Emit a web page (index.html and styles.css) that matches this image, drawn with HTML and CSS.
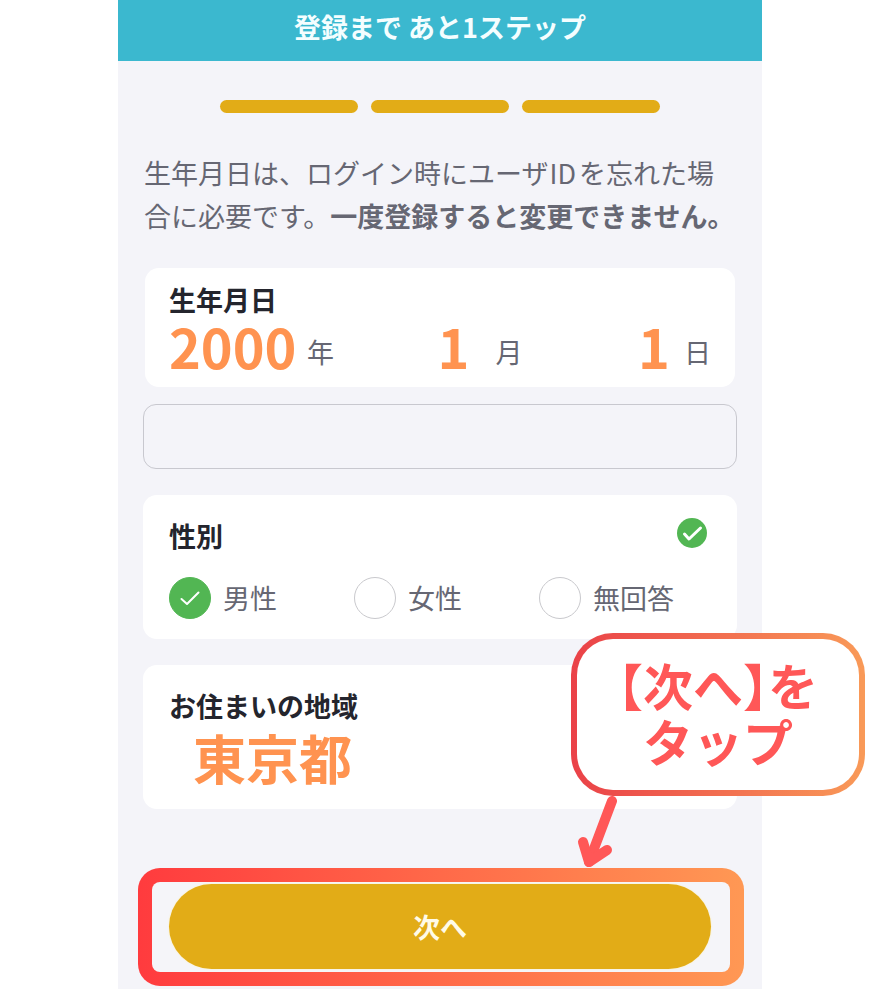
FILE: index.html
```html
<!DOCTYPE html>
<html lang="ja">
<head>
<meta charset="utf-8">
<meta name="viewport" content="width=device-width, initial-scale=1">
<title>登録まで あと1ステップ</title>
<link rel="stylesheet" href="styles.css">
</head>
<body>
<main class="screen">
  <header class="header"><h1 class="title">登録まで あと1ステップ</h1></header>
  <div class="progress">
    <span class="step"></span><span class="step"></span><span class="step"></span>
  </div>
  <p class="lead">生年月日は、ログイン時にユーザ<span class="latin">ID</span>を忘れた場<br>合に必要です。<strong>一度登録すると変更できません。</strong></p>

  <form class="form">
    <fieldset class="card card-birth">
      <legend class="label">生年月日</legend>
      <div class="birth">
        <label class="part part-year"><input class="value" type="text" inputmode="numeric" value="2000"><span class="unit">年</span></label>
        <label class="part part-month"><input class="value" type="text" inputmode="numeric" value="1"><span class="unit">月</span></label>
        <label class="part part-day"><input class="value" type="text" inputmode="numeric" value="1"><span class="unit">日</span></label>
      </div>
    </fieldset>

    <input class="blank" type="text" aria-label="入力欄">

    <fieldset class="card card-gender">
      <legend class="label">性別</legend>
      <svg class="done" viewBox="0 0 30 30" aria-hidden="true">
        <circle cx="15" cy="15" r="15"/>
        <path d="M7.500 16 L12 21 L23.500 10"/>
      </svg>
      <div class="options">
        <label class="option"><input class="radio" type="radio" name="gender" checked><svg class="tick" viewBox="0 0 42 42" aria-hidden="true"><path d="M12.500 22 L18 27 L29.500 15.500"/></svg><span>男性</span></label>
        <label class="option"><input class="radio" type="radio" name="gender"><span>女性</span></label>
        <label class="option"><input class="radio" type="radio" name="gender"><span>無回答</span></label>
      </div>
    </fieldset>

    <div class="card card-region">
      <label class="label" for="region">お住まいの地域</label>
      <select class="region" id="region"><option>東京都</option></select>
    </div>

    <div class="highlight">
      <button class="next" type="button">次へ</button>
    </div>
  </form>

  <aside class="callout">【次へ】を<br>タップ</aside>
  <svg class="arrow" viewBox="0 0 50 76" aria-hidden="true">
    <path d="M39 5 L16 66"/>
    <path d="M10 46 L16 66 L34 54"/>
  </svg>
</main>
</body>
</html>
```
FILE: styles.css
```css
* { box-sizing: border-box; }

body {
  margin: 0;
  background: #fff;
  color: #666773;
  font-family: "Noto Sans CJK JP", sans-serif;
  font-size: 27px;
}

input, select, button { font-family: inherit; color: inherit; }

.screen {
  position: relative;
  max-width: 644px;
  margin: 0 auto;
  padding-bottom: 3px;
  background: #f4f4f9;
}

.header {
  display: flex;
  justify-content: center;
  padding: 7px 0 14px;
  background: #3bb8cf;
}

.title {
  margin: 0;
  color: #f4feff;
  font-size: 27px;
  font-weight: 700;
  line-height: 40px;
}

.progress {
  display: flex;
  justify-content: center;
  gap: 13px;
  padding: 39px 0 38px;
}

.step {
  width: 138px;
  height: 13px;
  border-radius: 7px;
  background: #e2ac17;
}

.lead {
  margin: 0;
  padding: 0 20px 0 26px;
  line-height: 43px;
}

.latin { margin: 0 3px 0 1px; }

.form {
  display: flex;
  flex-direction: column;
  padding: 31px 25px 0;
}

.card {
  min-width: 0;
  margin: 0;
  border: 0;
  border-radius: 14px;
  background: #fff;
}

.label {
  display: block;
  float: left;
  width: 100%;
  padding: 0;
  color: #24252d;
  font-size: 27px;
  font-weight: 700;
  line-height: 40px;
}

.card-birth {
  margin: 0 2px;
  padding: 12px 24px 17px;
}

.birth {
  display: grid;
  grid-template-columns: 269fr 201fr 73fr;
  clear: both;
}

.part {
  display: flex;
  align-items: flex-end;
}

.unit { line-height: 36px; }

.part-year { gap: 10px; }
.part-month { gap: 26px; }
.part-day { gap: 14px; }

.value {
  width: 32px;
  height: 50px;
  padding: 0;
  border: 0;
  outline: 0;
  background: none;
  color: #ff9350;
  font-size: 54px;
  font-weight: 700;
  line-height: 50px;
}

.part-year .value { width: 128px; }

.blank {
  height: 65px;
  margin: 17px 0 26px;
  padding: 0 24px;
  border: 1px solid #c8c8cf;
  border-radius: 13px;
  background: #f4f4f9;
  font-size: 27px;
}

.card-gender {
  position: relative;
  padding: 21px 26px 20px;
}

.done {
  position: absolute;
  top: 23px;
  right: 30px;
  width: 30px;
  height: 30px;
  fill: #52b653;
}

.done path, .tick path {
  fill: none;
  stroke: #fff;
  stroke-width: 3;
  stroke-linecap: round;
  stroke-linejoin: round;
}

.tick path { stroke-width: 2; }

.options {
  display: grid;
  grid-template-columns: repeat(3, 185px);
  clear: both;
  padding-top: 21px;
}

.option {
  position: relative;
  display: flex;
  align-items: center;
  gap: 12px;
  line-height: 42px;
}

.radio {
  appearance: none;
  width: 42px;
  height: 42px;
  margin: 0;
  border: 1px solid #c9c9cd;
  border-radius: 50%;
  background: #fff;
}

.radio:checked {
  border-color: #52b653;
  background: #52b653;
}

.tick {
  position: absolute;
  top: 0;
  left: 0;
  width: 42px;
  height: 42px;
}

.card-region {
  margin-top: 26px;
  padding: 21px 26px 21px;
}

.region {
  appearance: none;
  display: block;
  width: 100%;
  height: 62px;
  padding: 0 24px;
  border: 0;
  background: none;
  color: #ff9350;
  font-size: 53px;
  font-weight: 700;
  line-height: 62px;
}

.highlight {
  margin: 59px -7px 0 -5px;
  padding: 2px 19px 3px 17px;
  border: 14px solid transparent;
  border-radius: 22px;
  background:
    linear-gradient(#f5f5f9, #f5f5f9) padding-box,
    linear-gradient(90deg, #ff3b3e, #ff9854) border-box;
}

.next {
  display: block;
  width: 100%;
  height: 85px;
  padding: 0;
  border: 0;
  border-radius: 43px;
  background: #e2ac17;
  box-shadow: 0 0 2px #fff0b8;
  color: #fffbe8;
  font-size: 27px;
  font-weight: 700;
}

.callout {
  position: absolute;
  top: 633px;
  right: -103px;
  width: 294px;
  padding: 17px 0 22px;
  border: 6px solid transparent;
  border-radius: 42px;
  background:
    linear-gradient(#fff, #fff) padding-box,
    linear-gradient(90deg, #ea4148, #f99a58) border-box;
  color: #ff5757;
  font-size: 50px;
  font-weight: 700;
  font-feature-settings: "halt";
  line-height: 56px;
  text-align: center;
}

.arrow {
  position: absolute;
  top: 796px;
  right: 139px;
  width: 50px;
  height: 76px;
  fill: none;
  stroke: #ff5757;
  stroke-width: 10;
  stroke-linecap: round;
  stroke-linejoin: round;
}
```
